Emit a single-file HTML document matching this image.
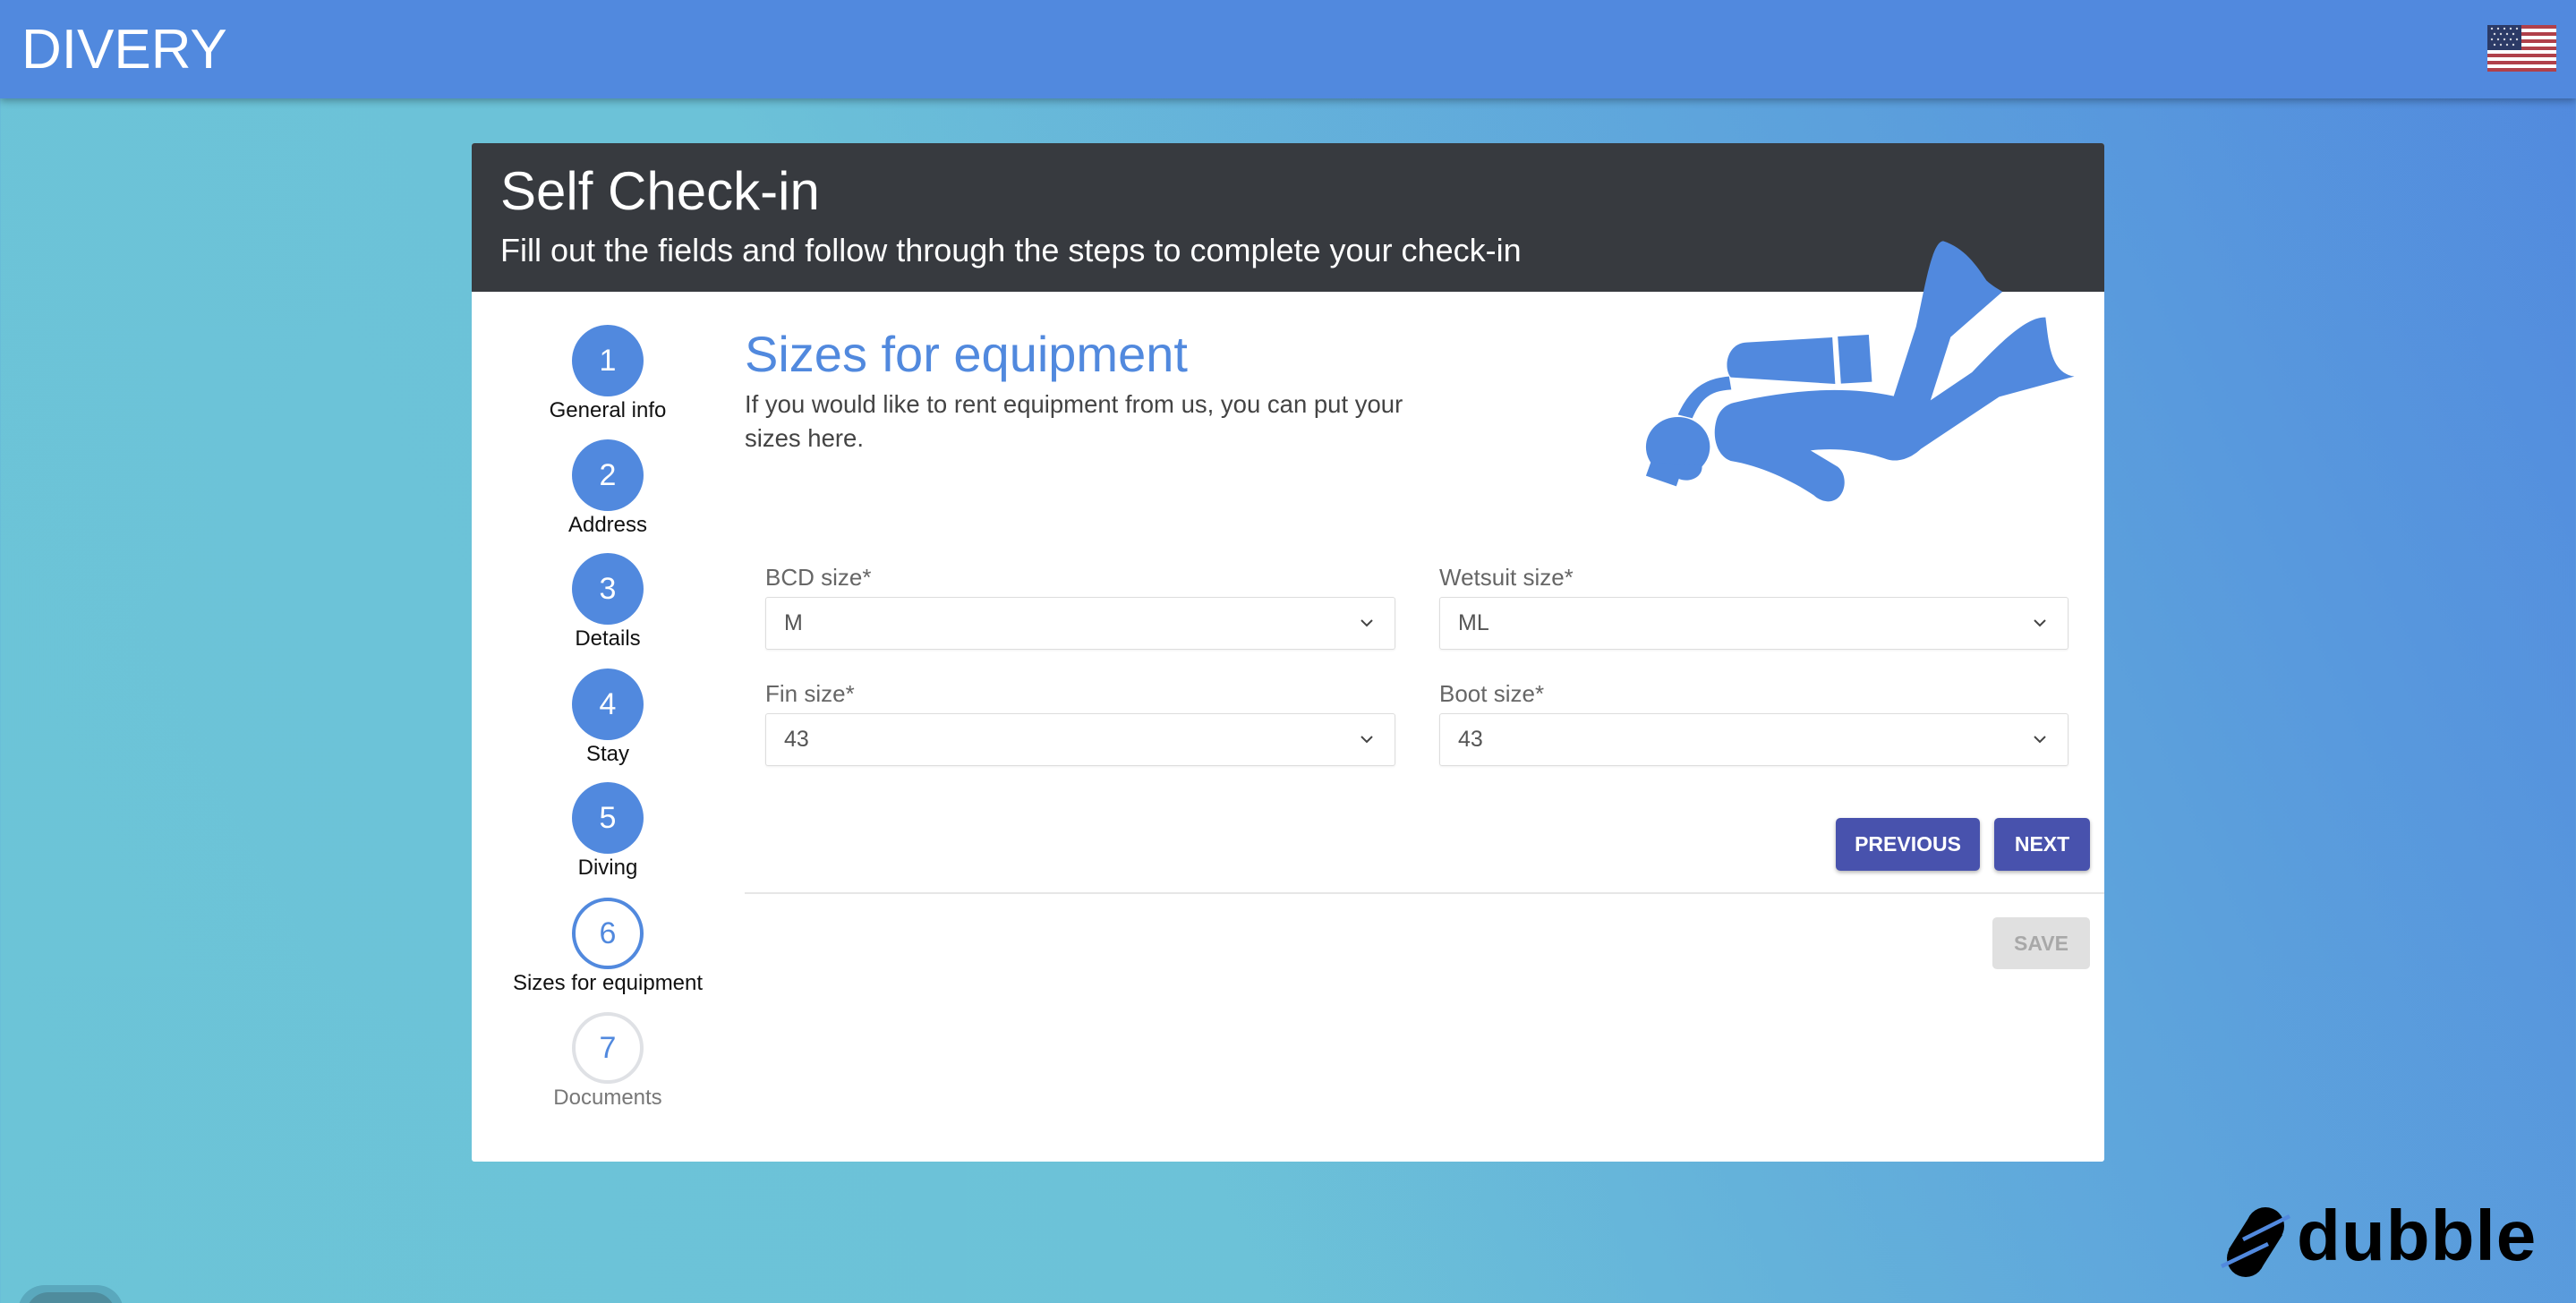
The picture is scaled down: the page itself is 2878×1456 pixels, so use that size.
<!DOCTYPE html>
<html><head><meta charset="utf-8">
<style>
*{margin:0;padding:0;box-sizing:border-box}
html,body{width:2878px;height:1456px;overflow:hidden}
body{font-family:"Liberation Sans",sans-serif;background:linear-gradient(65deg,#6cc4d7 0%,#6cc2d8 40%,#5ea5dc 70%,#5189de 100%);position:relative}
.top{position:absolute;left:0;top:0;width:2878px;height:110px;background:#5189de;box-shadow:0 3px 8px rgba(0,0,0,.3)}
.logo{position:absolute;left:24px;top:25px;color:#fff;font-size:62px;letter-spacing:0px;font-weight:normal;line-height:62px}
.card{position:absolute;left:527px;top:160px;width:1824px;height:1138px;background:#fff;border-radius:3px;overflow:hidden}
.hd{position:absolute;left:0;top:0;width:1824px;height:166px;background:#373a3f}
.t1{position:absolute;left:32px;top:18px;color:#fff;font-size:60px;line-height:72px}
.t2{position:absolute;left:32px;top:98px;color:#fff;font-size:36px;line-height:44px}
.c{position:absolute;width:80px;height:80px;border-radius:50%;background:#5189de;color:#fff;font-size:34px;line-height:80px;text-align:center}
.lb{position:absolute;width:300px;text-align:center;font-size:24px;color:#111;line-height:28px}
.h2{position:absolute;left:305px;top:203px;color:#5189de;font-size:56px;line-height:66px}
.p{position:absolute;left:305px;top:273px;color:#444;font-size:27.5px;line-height:38px;width:900px}
.fl{position:absolute;color:#666;font-size:26px;line-height:30px}
.sel{position:absolute;height:59px;border:1px solid #ddd;border-radius:3px;box-shadow:0 1px 2px rgba(0,0,0,.06)}
.sel span{position:absolute;left:20px;top:14px;font-size:25px;color:#555}
.sel svg{position:absolute;right:24px;top:24px}
.btn{position:absolute;height:59px;border-radius:5px;background:#4852ad;color:#fff;font-size:23px;font-weight:bold;text-align:center;line-height:59px;box-shadow:0 2px 4px rgba(0,0,0,.3)}
</style></head><body>
<div class="top">
  <div class="logo">DIVERY</div>
  <svg style="position:absolute;left:2779px;top:28px" width="77" height="52" viewBox="0 0 77 52">
    <rect width="77" height="52" fill="#fff"/>
    <g fill="#b0404a">
      <rect y="0" width="77" height="4"/><rect y="8" width="77" height="4"/><rect y="16" width="77" height="4"/><rect y="24" width="77" height="4"/><rect y="32" width="77" height="4"/><rect y="40" width="77" height="4"/><rect y="48" width="77" height="4"/>
    </g>
    <rect width="38" height="28" fill="#2b3a66"/>
    <g fill="#fff" opacity=".8"><circle cx="5" cy="4" r="1.2"/><circle cx="12" cy="4" r="1.2"/><circle cx="19" cy="4" r="1.2"/><circle cx="26" cy="4" r="1.2"/><circle cx="33" cy="4" r="1.2"/><circle cx="8" cy="10" r="1.2"/><circle cx="15" cy="10" r="1.2"/><circle cx="22" cy="10" r="1.2"/><circle cx="29" cy="10" r="1.2"/><circle cx="5" cy="16" r="1.2"/><circle cx="12" cy="16" r="1.2"/><circle cx="19" cy="16" r="1.2"/><circle cx="26" cy="16" r="1.2"/><circle cx="33" cy="16" r="1.2"/><circle cx="8" cy="22" r="1.2"/><circle cx="15" cy="22" r="1.2"/><circle cx="22" cy="22" r="1.2"/><circle cx="29" cy="22" r="1.2"/></g>
  </svg>
</div>

<div class="card">
  <div class="hd">
    <div class="t1">Self Check-in</div>
    <div class="t2">Fill out the fields and follow through the steps to complete your check-in</div>
  </div>

  <div class="c" style="left:112px;top:203px">1</div><div class="lb" style="left:2px;top:285px">General info</div>
  <div class="c" style="left:112px;top:331px">2</div><div class="lb" style="left:2px;top:413px">Address</div>
  <div class="c" style="left:112px;top:458px">3</div><div class="lb" style="left:2px;top:540px">Details</div>
  <div class="c" style="left:112px;top:587px">4</div><div class="lb" style="left:2px;top:669px">Stay</div>
  <div class="c" style="left:112px;top:714px">5</div><div class="lb" style="left:2px;top:796px">Diving</div>
  <div class="c" style="left:112px;top:843px;background:#fff;border:4px solid #5189de;color:#5189de;line-height:72px">6</div><div class="lb" style="left:2px;top:925px">Sizes for equipment</div>
  <div class="c" style="left:112px;top:971px;background:#fff;border:4px solid #dfe1e5;color:#5189de;line-height:72px">7</div><div class="lb" style="left:2px;top:1053px;color:#777">Documents</div>

  <div class="h2">Sizes for equipment</div>
  <div class="p">If you would like to rent equipment from us, you can put your<br>sizes here.</div>

  <div class="fl" style="left:328px;top:470px">BCD size*</div>
  <div class="sel" style="left:328px;top:507px;width:704px"><span>M</span><svg width="14" height="9" viewBox="0 0 14 9"><path d="M1 1l6 6 6-6" fill="none" stroke="#444" stroke-width="2"/></svg></div>
  <div class="fl" style="left:1081px;top:470px">Wetsuit size*</div>
  <div class="sel" style="left:1081px;top:507px;width:703px"><span>ML</span><svg width="14" height="9" viewBox="0 0 14 9"><path d="M1 1l6 6 6-6" fill="none" stroke="#444" stroke-width="2"/></svg></div>
  <div class="fl" style="left:328px;top:600px">Fin size*</div>
  <div class="sel" style="left:328px;top:637px;width:704px"><span>43</span><svg width="14" height="9" viewBox="0 0 14 9"><path d="M1 1l6 6 6-6" fill="none" stroke="#444" stroke-width="2"/></svg></div>
  <div class="fl" style="left:1081px;top:600px">Boot size*</div>
  <div class="sel" style="left:1081px;top:637px;width:703px"><span>43</span><svg width="14" height="9" viewBox="0 0 14 9"><path d="M1 1l6 6 6-6" fill="none" stroke="#444" stroke-width="2"/></svg></div>

  <div class="btn" style="left:1524px;top:754px;width:161px">PREVIOUS</div>
  <div class="btn" style="left:1701px;top:754px;width:107px">NEXT</div>
  <div style="position:absolute;left:305px;top:837px;width:1519px;height:2px;background:#e6e6e6"></div>
  <div class="btn" style="left:1699px;top:865px;width:109px;height:58px;background:#e0e0e0;color:#a8a8a8;box-shadow:none;line-height:58px">SAVE</div>
</div>

<svg style="position:absolute;left:1780px;top:250px" width="560" height="330" viewBox="0 0 1568 990" preserveAspectRatio="none">
  <g fill="#5189de">
    <path d="M480,398 L748,381 L757,537 L430,515 C405,480 420,400 480,398 Z"/>
    <path d="M765,378 L862,372 L872,530 L775,536 Z"/>
    <path d="M265,640 C300,560 340,520 425,512 L432,556 C370,560 340,580 310,652 Z"/>
    <circle cx="265" cy="748" r="100"/>
    <path d="M180,800 L165,845 L260,880 L268,855 C300,870 345,850 340,810 Z"/>
    <path d="M440,600 C600,560 780,540 940,578 L1010,345 C1040,200 1060,60 1095,58 C1160,80 1200,140 1230,190 C1250,210 1270,220 1280,228 L1118,380 L1055,592 L1185,498 C1280,390 1360,310 1415,314 C1425,400 1430,500 1505,512 L1270,580 L1025,755 C990,790 950,800 920,790 C840,760 760,750 680,760 L765,815 C800,845 790,920 745,930 C720,935 700,920 690,910 C620,860 520,810 430,795 C390,780 370,720 385,660 C395,620 420,605 440,600 Z"/>
  </g>
</svg>

<svg style="position:absolute;left:2470px;top:1336px" width="100" height="100" viewBox="0 0 100 100">
  <g fill="#000">
    <circle cx="61" cy="34" r="21"/>
    <circle cx="39" cy="70" r="21"/>
    <path d="M44,22 L80,44 L56,82 L20,60 Z"/>
  </g>
  <g stroke="#5189de" stroke-width="4.5" stroke-linecap="butt">
    <line x1="36" y1="49" x2="88" y2="23"/>
    <line x1="12" y1="79" x2="64" y2="54"/>
  </g>
</svg>
<div style="position:absolute;left:2566px;top:1336px;font-size:80px;font-weight:bold;color:#000;line-height:90px;letter-spacing:1px">dubble</div>

<div style="position:absolute;left:20px;top:1436px;width:118px;height:60px;border-radius:34px;background:#5aa8bd"></div>
<div style="position:absolute;left:29px;top:1444px;width:100px;height:50px;border-radius:28px;background:#4f8c9d"></div>
</body></html>
